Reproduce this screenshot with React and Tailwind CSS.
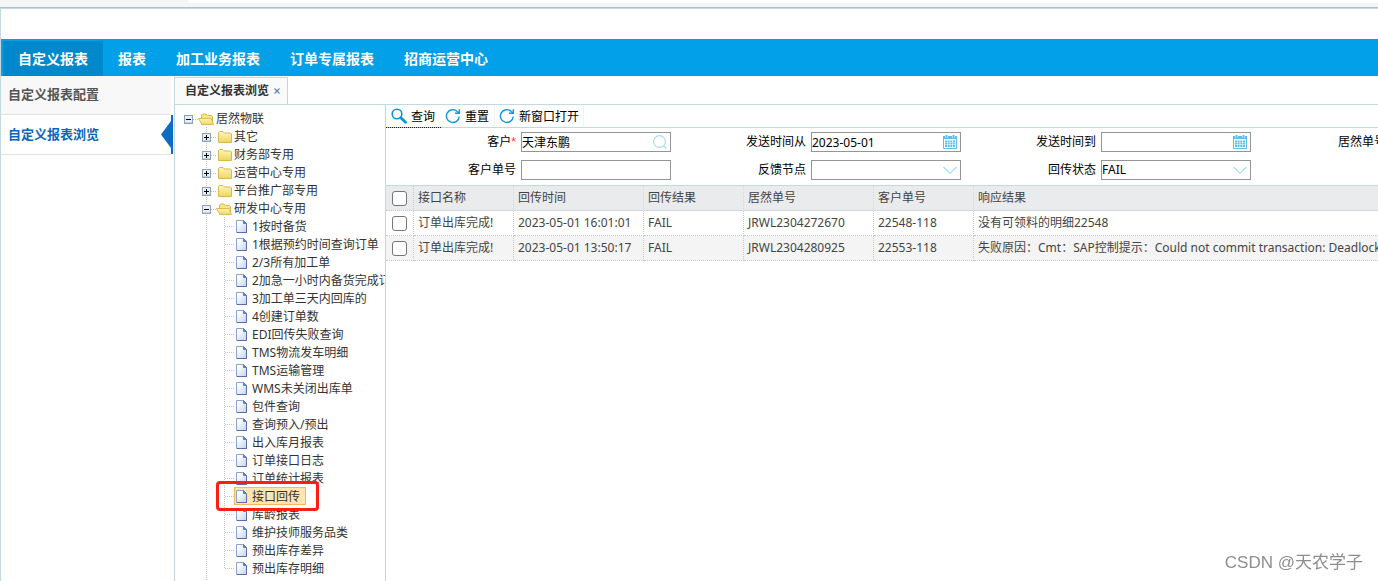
import { useState } from 'react';

const NAV = ['自定义报表', '报表', '加工业务报表', '订单专属报表', '招商运营中心'];
const SIDE = ['自定义报表配置', '自定义报表浏览'];

const TREE = [
  { label: '居然物联', level: 0, open: true },
  { label: '其它', level: 1 },
  { label: '财务部专用', level: 1 },
  { label: '运营中心专用', level: 1 },
  { label: '平台推广部专用', level: 1 },
  { label: '研发中心专用', level: 1, open: true },
  { label: '1按时备货', level: 2 },
  { label: '1根据预约时间查询订单', level: 2 },
  { label: '2/3所有加工单', level: 2 },
  { label: '2加急一小时内备货完成订单', level: 2 },
  { label: '3加工单三天内回库的', level: 2 },
  { label: '4创建订单数', level: 2 },
  { label: 'EDI回传失败查询', level: 2 },
  { label: 'TMS物流发车明细', level: 2 },
  { label: 'TMS运输管理', level: 2 },
  { label: 'WMS未关闭出库单', level: 2 },
  { label: '包件查询', level: 2 },
  { label: '查询预入/预出', level: 2 },
  { label: '出入库月报表', level: 2 },
  { label: '订单接口日志', level: 2 },
  { label: '订单统计报表', level: 2 },
  { label: '接口回传', level: 2 },
  { label: '库龄报表', level: 2 },
  { label: '维护技师服务品类', level: 2 },
  { label: '预出库存差异', level: 2 },
  { label: '预出库存明细', level: 2, last: true },
];

const COLUMNS = ['接口名称', '回传时间', '回传结果', '居然单号', '客户单号', '响应结果'];
const ROWS = [
  ['订单出库完成!', '2023-05-01 16:01:01', 'FAIL', 'JRWL2304272670', '22548-118', '没有可领料的明细22548'],
  ['订单出库完成!', '2023-05-01 13:50:17', 'FAIL', 'JRWL2304280925', '22553-118', '失败原因：Cmt：SAP控制提示：Could not commit transaction: Deadlock found'],
];

function Guide({ corner, last }) {
  return (
    <svg className="h-[18px] w-[18px] shrink-0" viewBox="0 0 18 18" stroke="#c3c3c3" strokeDasharray="1 1" fill="none">
      <path d={last ? 'M8.5 0V10' : 'M8.5 0V18'} />
      {corner && <path d="M9 9.5H18" />}
    </svg>
  );
}

function Expander({ open, root }) {
  return (
    <svg className="h-[18px] w-[18px] shrink-0" viewBox="0 0 18 18" fill="none">
      <g stroke="#c3c3c3" strokeDasharray="1 1">
        {!root && <path d="M8.5 0V18" />}
        <path d="M13 10.5H18" />
      </g>
      <rect x="4.5" y="6.5" width="8" height="8" fill="#e9eef4" stroke="#8ba1b8" />
      <path d="M5 13.5H12" stroke="#cdd3da" />
      <path d={open ? 'M6 10.5H11' : 'M6 10.5H11M8.5 8V13'} stroke="#000" />
    </svg>
  );
}

function FolderIcon({ open }) {
  return (
    <svg className="h-[18px] w-[18px] shrink-0" viewBox="0 0 18 18">
      <defs>
        <linearGradient id="folder" x1="0" y1="0" x2="0" y2="1">
          <stop offset="0" stopColor="#fdf6b8" />
          <stop offset="1" stopColor="#f0d564" />
        </linearGradient>
      </defs>
      {open ? (
        <>
          <path d="M3.5 15.5V6L4.5 5H8L9.5 6.5H13.5L14.5 7.5V15.5Z" fill="#f6e58c" stroke="#d9b84e" />
          <path d="M0.5 9.5H13L15.5 15.5H4Z" fill="url(#folder)" stroke="#dcbc55" />
        </>
      ) : (
        <path d="M2.5 15.5V5.5L3.5 4.5H7L8.5 6H14.5L15.5 7V15.5Z" fill="url(#folder)" stroke="#d9b84e" />
      )}
    </svg>
  );
}

function FileIcon() {
  return (
    <svg className="h-[18px] w-[18px] shrink-0" viewBox="0 0 18 18">
      <defs>
        <linearGradient id="file" x1="0" y1="0" x2="1" y2="1">
          <stop offset="0.2" stopColor="#ffffff" />
          <stop offset="1" stopColor="#bcd3f3" />
        </linearGradient>
      </defs>
      <path d="M2.5 15.5V3.5H9.5L12.5 6.5V15.5Z" fill="url(#file)" stroke="#8aa2d8" />
      <path d="M12.5 7V15.5H3" fill="none" stroke="#5f69a6" />
      <path d="M9.5 3.5V6.5H12.5Z" fill="#5a7fc4" stroke="#5a7fc4" />
    </svg>
  );
}

function TreeRow({ node, selected, onSelect }) {
  const { label, level, open, last } = node;
  return (
    <li className="relative flex h-[18px] whitespace-nowrap">
      {level === 1 && <span className="w-[18px] shrink-0" />}
      {level === 2 && (
        <>
          <span className="w-[18px] shrink-0" />
          <Guide />
          <Guide corner last={last} />
        </>
      )}
      {level < 2 && <Expander open={open} root={level === 0} />}
      <button
        type="button"
        onClick={onSelect}
        className={`flex h-[18px] items-center text-xs leading-4 text-[#333] ${selected ? 'bg-[#ffe6b0] pr-1.5 outline-1 -outline-offset-1 outline-[#f5b95c]' : ''}`}
      >
        {level < 2 ? <FolderIcon open={open} /> : <FileIcon />}
        <span className="pt-0.5">{label}</span>
      </button>
      {selected && (
        <span className="pointer-events-none absolute -top-1.5 left-9 z-10 h-[30px] w-[103px] rounded-[4px] border-3 border-[#fb1e12]" />
      )}
    </li>
  );
}

function SearchIcon() {
  return (
    <svg className="h-4 w-4" viewBox="0 0 16 16" fill="none" stroke="#0a94dc">
      <circle cx="6" cy="6" r="4.8" strokeWidth="1.6" />
      <path d="M9.8 9.8L14.5 14.3" strokeWidth="2.8" strokeLinecap="round" />
    </svg>
  );
}

function RefreshIcon() {
  return (
    <svg className="h-4 w-4" viewBox="0 0 16 16" fill="none" stroke="#1298da" strokeWidth="1.4">
      <path d="M14.2 8.5A6.4 6.4 0 1 1 12.2 3.4L14 5" />
      <path d="M14.3 1.2V5.3H10" />
    </svg>
  );
}

function CalendarIcon() {
  return (
    <svg className="h-4 w-4" viewBox="0 0 16 16" fill="none" stroke="#5dbdec">
      <path d="M1.5 3.5H14.5V14.5H1.5Z" />
      <path d="M1 3.5H15" strokeWidth="3" />
      <path d="M4.5 0V4M11.5 0V4" stroke="#fff" strokeWidth="3" />
      <path d="M4.5 1V4M11.5 1V4" strokeWidth="2" />
      <path d="M3 7.5H13M3 12H13" strokeWidth="2" strokeDasharray="2 0.66" />
      <path d="M3 9.75H13" strokeWidth="1.5" strokeDasharray="2 0.66" />
    </svg>
  );
}

function LookupIcon() {
  return (
    <svg className="h-4 w-4" viewBox="0 0 16 16" fill="none" stroke="#a9dcf5" strokeWidth="1.2">
      <circle cx="7.5" cy="7.5" r="5.9" />
      <path d="M11.6 11.6L14.5 14.5" />
    </svg>
  );
}

function ArrowIcon() {
  return (
    <svg className="h-4 w-4" viewBox="0 0 16 16" fill="none" stroke="#a0d9f4" strokeWidth="1.1">
      <path d="M1.5 5L8 11.3L14.5 5" />
    </svg>
  );
}

function Field({ id, label, required, icon: Icon, value = '', options }) {
  const box = 'block h-5 w-full appearance-none border border-[#959595] bg-white p-0 text-xs text-black outline-none';
  return (
    <div className="flex h-5 items-center gap-[5px]">
      <label htmlFor={id} className="w-[130px] shrink-0 text-right text-xs text-black">
        {label}
        {required && <span className="font-['Liberation_Sans'] text-[#ff3030]">*</span>}
      </label>
      <div className="relative w-[150px] shrink-0">
        {options ? (
          <select id={id} defaultValue={value} className={box}>
            {options.map((o) => <option key={o} value={o}>{o}</option>)}
          </select>
        ) : (
          <input id={id} type="text" defaultValue={value} className={box} />
        )}
        {Icon && <span className="pointer-events-none absolute top-0.5 right-[3px]"><Icon /></span>}
      </div>
    </div>
  );
}

const CHECKBOX = 'block h-[15px] w-[15px] appearance-none rounded-[3px] border border-[#767676] bg-white';

export default function App() {
  const [active, setActive] = useState('接口回传');

  return (
    <div className="flex min-h-screen flex-col overflow-hidden bg-white font-['Noto_Sans','Noto_Sans_CJK_SC',sans-serif]">
      {/* window edge above the page */}
      <div className="h-2 border-b border-[#b4bfc3] bg-[#f5f5f5] pl-[188px]">
        <div className="h-[3px] rounded-bl bg-white" />
      </div>

      <div className="flex flex-1 flex-col border-t border-l border-[#c3d9e0]">
        <header className="pt-[30px]">
          <nav className="flex h-[37px] items-end bg-[#02a0e9] pl-0.5">
            {NAV.map((item, i) => (
              <a
                key={item}
                href="#"
                className={`flex h-[35px] items-center px-[15px] text-sm font-bold text-white ${i === 0 ? 'bg-[#0088cc]' : ''}`}
              >
                {item}
              </a>
            ))}
          </nav>
        </header>

        <div className="flex flex-1">
          <aside className="w-[173px] shrink-0 pr-px">
            {SIDE.map((item, i) => (
              <div key={item} className="flex">
                <a
                  href="#"
                  className={`flex flex-1 items-center border-b border-[#e3e3e3] pl-[7px] text-[13px] font-bold ${i === 0 ? 'h-[39px] bg-[#f8f8f8] text-[#555]' : 'h-10 text-[#0b67b9]'}`}
                >
                  {item}
                </a>
                {i === 1 ? (
                  <svg className="-ml-2.5 h-[39px] w-3 shrink-0" viewBox="0 0 12 39" fill="#0c6cbd">
                    <path d="M10 0H12V39H10V33L0 19.5L10 6Z" />
                  </svg>
                ) : (
                  <span className="w-0.5 shrink-0" />
                )}
              </div>
            ))}
          </aside>

          <main className="flex min-w-0 flex-1 flex-col border-l border-[#c3d9e0]">
            <div className="flex h-[29px] border-b border-[#c3d9e0] pt-px">
              <div className="flex w-[113px] items-center gap-0.5 border-t border-r border-[#c3d9e0] bg-[#fafafa] pl-2.5 text-xs font-bold whitespace-nowrap text-[#333]">
                自定义报表浏览
                <button type="button" aria-label="关闭" className="flex h-3 w-3 items-center justify-center">
                  <svg className="h-1.5 w-1.5" viewBox="0 0 6 6" stroke="#5d87b8" strokeWidth="1.2">
                    <path d="M0.5 0.5L5.5 5.5M5.5 0.5L0.5 5.5" />
                  </svg>
                </button>
              </div>
            </div>

            <div className="flex flex-1">
              <ul className="w-[211px] shrink-0 overflow-hidden border-r border-[#c3d9e0] pt-1 pl-[5px]">
                {TREE.map((node) => (
                  <TreeRow
                    key={node.label}
                    node={node}
                    selected={node.label === active}
                    onSelect={() => setActive(node.label)}
                  />
                ))}
                <li className="flex"><span className="w-[18px]" /><Guide /></li>
              </ul>

              <section className="min-w-0 flex-1 overflow-hidden">
                <div className="flex h-[23px] border-b border-[#c3d9e0] text-xs text-black">
                  <button type="button" className="-mb-px flex w-[55px] items-center gap-1 border-b border-dotted border-[#0000ff] pl-[5px]">
                    <SearchIcon /><span className="pt-0.5">查询</span>
                  </button>
                  <button type="button" className="flex w-[54px] items-center gap-1 border-r border-[#f3f3f3] pl-1">
                    <RefreshIcon /><span className="pt-0.5">重置</span>
                  </button>
                  <button type="button" className="flex w-[89px] items-center gap-1 border-r border-[#f3f3f3] pl-1">
                    <RefreshIcon /><span className="pt-0.5">新窗口打开</span>
                  </button>
                </div>

                <form className="grid grid-cols-[285px_285px_285px_285px] gap-x-[5px] gap-y-2 border-b border-[#c3d9e0] pt-1 pb-[5px]">
                  <Field id="customer" label="客户" required value="天津东鹏" icon={LookupIcon} />
                  <Field id="from" label="发送时间从" value="2023-05-01" icon={CalendarIcon} />
                  <Field id="to" label="发送时间到" icon={CalendarIcon} />
                  <Field id="order" label="居然单号" />
                  <Field id="customerOrder" label="客户单号" />
                  <Field id="node" label="反馈节点" options={['']} icon={ArrowIcon} />
                  <Field id="status" label="回传状态" value="FAIL" options={['FAIL', 'SUCCESS']} icon={ArrowIcon} />
                </form>

                <table className="w-full table-fixed border-separate border-spacing-0 text-left text-xs text-[#444]">
                  <colgroup>
                    <col className="w-7" />
                    <col className="w-[100px]" />
                    <col className="w-[130px]" />
                    <col className="w-[100px]" />
                    <col className="w-[130px]" />
                    <col className="w-[100px]" />
                    <col />
                  </colgroup>
                  <thead>
                    <tr className="h-[25px] bg-[#eaebed]">
                      <th className="border-r border-b border-dotted border-[#c8c8c8] p-0 pl-1.5">
                        <input type="checkbox" aria-label="全选" className={CHECKBOX} />
                      </th>
                      {COLUMNS.map((c) => (
                        <th key={c} className="border-r border-b border-[#d4d8da] [border-right-style:dotted] p-0 pl-1 font-normal last:border-r-0">{c}</th>
                      ))}
                    </tr>
                  </thead>
                  <tbody>
                    {ROWS.map((row) => (
                      <tr key={row[3]} className="h-[25px] even:bg-[#f4f4f4]">
                        <td className="border-r border-b border-dotted border-[#c8c8c8] p-0 pl-1.5">
                          <input type="checkbox" aria-label={row[3]} className={CHECKBOX} />
                        </td>
                        {row.map((cell, i) => (
                          <td key={i} className="overflow-hidden border-r border-b border-dotted border-[#c8c8c8] p-0 pl-1 whitespace-nowrap last:border-r-0">{cell}</td>
                        ))}
                      </tr>
                    ))}
                  </tbody>
                </table>
              </section>
            </div>
          </main>
        </div>
      </div>

      <div className="pointer-events-none fixed right-[15px] bottom-1.5 font-['Liberation_Sans','Noto_Sans_CJK_SC',sans-serif] text-[17px] text-[#8e8e8e]">CSDN @天农学子</div>
    </div>
  );
}
